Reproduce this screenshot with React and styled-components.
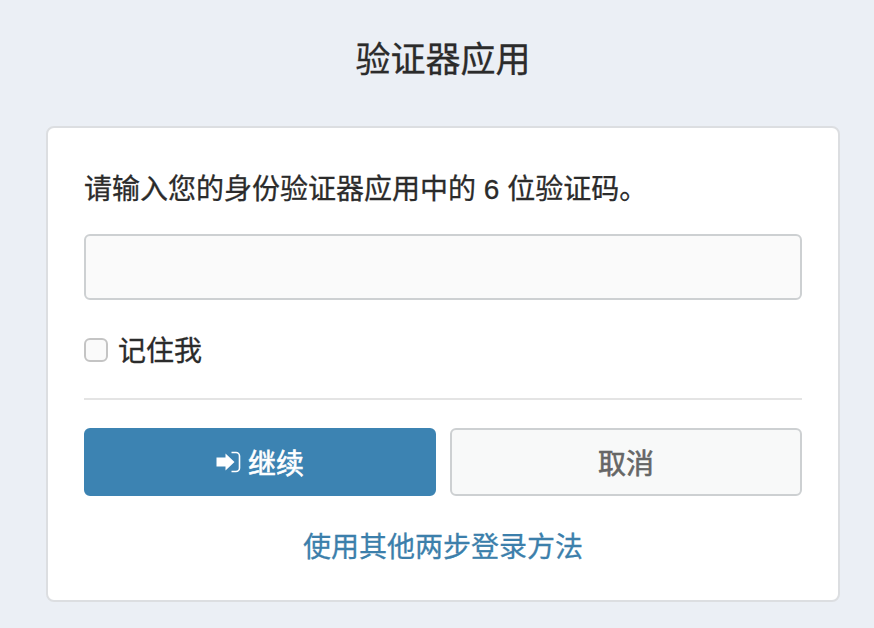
import styled, { createGlobalStyle } from 'styled-components';

const GlobalStyle = createGlobalStyle`
  html, body {
    margin: 0;
    height: 100%;
    background-color: #ebeff5;
  }
  body {
    font-family: "Liberation Sans", "Noto Sans CJK SC", sans-serif;
    color: #2b2b2b;
    -webkit-text-stroke: 0.3px currentColor;
  }
`;

const Page = styled.div`
  width: 874px;
  height: 628px;
  box-sizing: border-box;
  padding: 0 34px 0 46px;
  overflow: hidden;
`;

const Title = styled.h1`
  margin: 0;
  height: 126px;
  padding-top: 38px;
  box-sizing: border-box;
  font-size: 35px;
  line-height: 44px;
  font-weight: 400;
  text-align: center;
  color: #2b2b2b;
`;

const Card = styled.div`
  box-sizing: border-box;
  height: 476px;
  padding: 41px 36px 0;
  background-color: #fff;
  border: 2px solid #dcdee1;
  border-radius: 8px;
`;

const Prompt = styled.p`
  margin: 0 0 23px;
  font-size: 28px;
  line-height: 42px;
`;

const CodeInput = styled.input`
  display: block;
  box-sizing: border-box;
  width: 100%;
  height: 66px;
  background-color: #fafafa;
  border: 2px solid #cdd0d2;
  border-radius: 6px;
  outline: none;
`;

const RememberRow = styled.label`
  display: flex;
  align-items: center;
  gap: 10px;
  height: 42px;
  margin-top: 28px;
  font-size: 28px;
`;

const CheckBox = styled.span`
  box-sizing: border-box;
  width: 24px;
  height: 24px;
  margin-top: 2px;
  background-color: #fafafa;
  border: 2px solid #c4c4c4;
  border-radius: 6px;
`;

const Divider = styled.hr`
  margin: 28px 0;
  height: 2px;
  border: 0;
  background-color: #e4e4e4;
`;

const ButtonRow = styled.div`
  display: grid;
  grid-template-columns: 1fr 1fr;
  gap: 14px;
`;

const Button = styled.button`
  display: flex;
  align-items: center;
  justify-content: center;
  gap: 7px;
  box-sizing: border-box;
  height: 68px;
  padding: 0;
  font-family: inherit;
  font-size: 28px;
  font-weight: 400;
  -webkit-text-stroke: 0.6px currentColor;
  border-radius: 6px;
  color: ${(p) => (p.$primary ? '#fff' : '#666')};
  background-color: ${(p) => (p.$primary ? '#3c83b2' : '#f8f9f9')};
  border: 2px solid ${(p) => (p.$primary ? '#3c83b2' : '#cdd0d2')};
`;

const OtherMethod = styled.a`
  display: block;
  margin-top: 31px;
  font-size: 28px;
  line-height: 42px;
  text-align: center;
  color: #3c7fab;
`;

function SignInIcon() {
  return (
    <svg width="25" height="22" viewBox="0 0 25 22" fill="none">
      <path d="M0.5 6.5h9V2.5l9 8.5-9 8.5v-4h-9z" fill="#fff" stroke="none" />
      <path
        d="M15.5 1.5h4.5a3.5 3.5 0 0 1 3.5 3.5v12a3.5 3.5 0 0 1-3.5 3.5h-4.5"
        stroke="#fff"
        strokeWidth="1.6"
      />
    </svg>
  );
}

function App() {
  return (
    <Page>
      <GlobalStyle />
      <Title>验证器应用</Title>
      <Card>
        <Prompt>请输入您的身份验证器应用中的 6 位验证码。</Prompt>
        <CodeInput type="text" />
        <RememberRow>
          <CheckBox />
          记住我
        </RememberRow>
        <Divider />
        <ButtonRow>
          <Button $primary>
            <SignInIcon />
            继续
          </Button>
          <Button>取消</Button>
        </ButtonRow>
        <OtherMethod>使用其他两步登录方法</OtherMethod>
      </Card>
    </Page>
  );
}

export default App;
